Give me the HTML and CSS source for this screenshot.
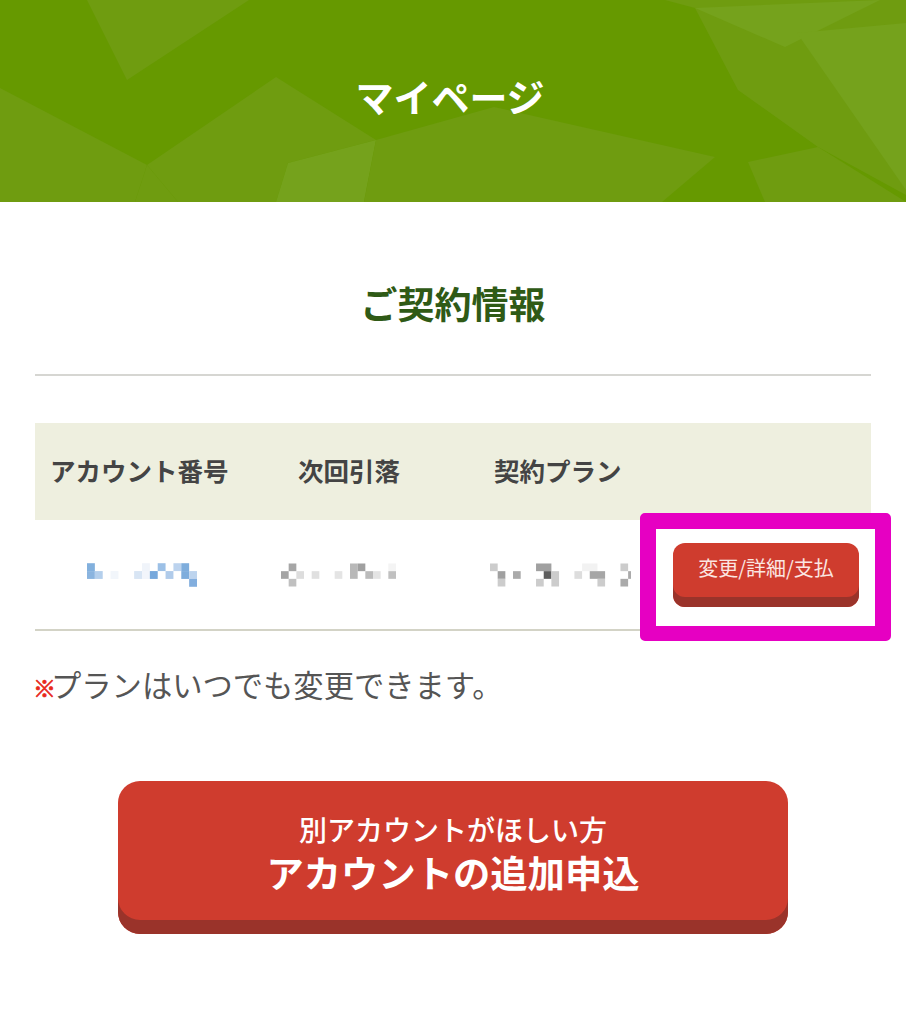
FILE: index.html
```html
<!DOCTYPE html>
<html lang="ja">
<head>
<meta charset="utf-8">
<title>マイページ</title>
<link rel="stylesheet" href="styles.css">
</head>
<body>
<header class="hero">
  <svg class="hero-bg" viewBox="0 0 906 202" preserveAspectRatio="none" aria-hidden="true">
    <polygon class="f1" points="87,0 249,0 127,80"/>
    <polygon class="f1" points="0,88 147,165 135,202 0,202"/>
    <polygon class="f1" points="147,165 276,77 376,140 288,163 276,202 178,202"/>
    <polygon class="f1" points="147,165 178,202 135,202"/>
    <polygon class="f2" points="376,140 288,163 276,202 364,202"/>
    <polygon class="f1" points="376,140 494,107 715,157 662,202 364,202"/>
    <polygon class="f1" points="665,0 906,0 906,195 818,147 738,90 695,8"/>
    <polygon class="f2" points="695,8 880,0 785,47"/>
    <polygon class="f2" points="797,33 906,23 906,190"/>
    <polygon class="f1" points="748,162 818,147 906,202 765,202"/>
  </svg>
  <h1 class="hero-title">マイページ</h1>
</header>
<main class="content">
  <h2 class="section-title">ご契約情報</h2>
  <table class="plan-table">
    <thead>
      <tr><th>アカウント番号</th><th>次回引落</th><th>契約プラン</th><th></th></tr>
    </thead>
    <tbody>
      <tr>
        <td><svg class="mosaic m1" viewBox="0 0 112 24" aria-label="モザイク"><rect x="0" y="0" width="8" height="8" fill="#82b0dd"/><rect x="56" y="0" width="8" height="8" fill="#f0f4fa"/><rect x="72" y="0" width="8" height="8" fill="#9cc0e6"/><rect x="88" y="0" width="8" height="8" fill="#bcd3ee"/><rect x="96" y="0" width="8" height="8" fill="#7eaddc"/><rect x="0" y="8" width="8" height="8" fill="#8ab4df"/><rect x="8" y="8" width="8" height="8" fill="#b4cfec"/><rect x="24" y="8" width="8" height="8" fill="#f2f6fb"/><rect x="48" y="8" width="8" height="8" fill="#d8e5f4"/><rect x="56" y="8" width="8" height="8" fill="#f2f5fb"/><rect x="64" y="8" width="8" height="8" fill="#76a8dc"/><rect x="80" y="8" width="8" height="8" fill="#b0cbea"/><rect x="96" y="8" width="8" height="8" fill="#7eaddc"/><rect x="104" y="8" width="8" height="8" fill="#bdd4ee"/><rect x="104" y="16" width="8" height="8" fill="#82aede"/></svg></td>
        <td><svg class="mosaic m2" viewBox="0 0 120 24" aria-label="モザイク"><rect x="8" y="0" width="8" height="8" fill="#a6a6a6"/><rect x="0" y="8" width="8" height="8" fill="#a4a4a4"/><rect x="16" y="8" width="8" height="8" fill="#ddd"/><rect x="8" y="16" width="8" height="8" fill="#c0c0c0"/><rect x="32" y="8" width="8" height="8" fill="#e0e0e0"/><rect x="56" y="8" width="8" height="8" fill="#e4e4e4"/><rect x="72" y="0" width="8" height="16" fill="#b8b8b8"/><rect x="80" y="0" width="8" height="8" fill="#a0a0a0"/><rect x="88" y="8" width="8" height="8" fill="#bbb"/><rect x="96" y="8" width="8" height="8" fill="#e4e4e4"/><rect x="112" y="0" width="8" height="8" fill="#f4f4f4"/><rect x="112" y="8" width="8" height="8" fill="#c0c0c0"/></svg></td>
        <td><svg class="mosaic m3" viewBox="0 0 147 24" aria-label="モザイク"><rect x="0" y="0" width="8" height="8" fill="#ccc"/><rect x="8" y="8" width="8" height="8" fill="#a0a0a0"/><rect x="8" y="16" width="8" height="8" fill="#ccc"/><rect x="24" y="8" width="8" height="8" fill="#aaa"/><rect x="48" y="0" width="16" height="8" fill="#a0a0a0"/><rect x="56" y="8" width="8" height="8" fill="#5e5e5e"/><rect x="64" y="8" width="8" height="16" fill="#ccc"/><rect x="48" y="16" width="8" height="8" fill="#ccc"/><rect x="88" y="8" width="8" height="8" fill="#ddd"/><rect x="96" y="0" width="16" height="8" fill="#f2f2f2"/><rect x="104" y="8" width="16" height="8" fill="#a6a6a6"/><rect x="112" y="16" width="8" height="8" fill="#ccc"/><rect x="136" y="0" width="8" height="8" fill="#ccc"/><rect x="136" y="16" width="8" height="8" fill="#aaa"/><rect x="144" y="8" width="3" height="8" fill="#aaa"/></svg></td>
        <td class="action-cell"><a class="btn-small" href="#">変更/詳細/支払</a></td>
      </tr>
    </tbody>
  </table>
  <p class="note"><span class="note-mark">※</span>プランはいつでも変更できます。</p>
  <a class="btn-large" href="#">
    <span class="btn-sub">別アカウントがほしい方</span>
    <span class="btn-main">アカウントの追加申込</span>
  </a>
</main>
</body>
</html>
```
FILE: styles.css
```css
*, *::before, *::after { box-sizing: border-box; }
html, body { margin: 0; padding: 0; background: #fff; }
body {
  font-family: "Noto Sans CJK JP", "Noto Sans", sans-serif;
  color: #444;
  height: 1024px;
  overflow: hidden;
}
.hero {
  position: relative;
  height: 202px;
  padding: 0 6px 10px 0;
  background: #669900;
  display: flex;
  align-items: center;
  justify-content: center;
}
.hero-bg { position: absolute; inset: 0; width: 100%; height: 100%; }
.f1 { fill: #6f9c10; }
.f2 { fill: #75a21c; }
.hero-title {
  position: relative;
  margin: 0;
  color: #fff;
  font-size: 38px;
  font-weight: 700;
  line-height: 1;
}
.content { padding: 0 35px; }
.section-title {
  margin: 0;
  height: 174px;
  padding-top: 77px;
  border-bottom: 2px solid #d6d6d2;
  text-align: center;
  font-size: 37px;
  line-height: 48px;
  font-weight: 700;
  color: #2f5a16;
}
.plan-table {
  width: 836px;
  margin-top: 47px;
  border-collapse: collapse;
  table-layout: fixed;
  border-bottom: 2px solid #d3d3c6;
}
.plan-table th {
  height: 97px;
  background: #eeefdf;
  font-size: 25.5px;
  font-weight: 700;
  color: #444;
  text-align: left;
  padding: 0 0 4px 15px;
}
.plan-table th:nth-child(1) { width: 222px; }
.plan-table th:nth-child(2) { width: 197px; padding-left: 41px; }
.plan-table th:nth-child(3) { width: 180px; padding-left: 40px; }
.plan-table td { height: 110px; padding: 0; text-align: center; }
.mosaic { display: block; height: 24px; }
.m1 { width: 110px; margin-left: 52px; }
.m2 { width: 115px; margin-left: 24px; }
.m3 { width: 141px; margin-left: 36px; }
.action-cell { position: relative; }
.btn-small {
  display: block;
  width: 186px;
  height: 64px;
  margin: 0 0 0 39px;
  padding-top: 9px;
  background: #cf3c2e;
  border-radius: 12px;
  box-shadow: inset 0 -10px 0 #9a332a;
  color: #fbe6e2;
  font-size: 20px;
  line-height: 32px;
  text-align: center;
  text-decoration: none;
}
.action-cell::after {
  content: "";
  position: absolute;
  left: 6px;
  top: -7px;
  width: 251px;
  height: 128px;
  border: 16px solid #e600c2;
  border-bottom-width: 15px;
  border-radius: 5px;
}
.note {
  margin: 32px 0 0;
  font-size: 30.3px;
  line-height: 42px;
  color: #555;
}
.note-mark {
  margin-left: -2px;
  color: #e8281a;
  font-size: 23px;
  font-weight: 700;
  letter-spacing: -5px;
  -webkit-text-stroke: 0.7px #e8281a;
}
.btn-large {
  display: flex;
  flex-direction: column;
  align-items: center;
  width: 670px;
  height: 153px;
  margin: 73px 0 0 83px;
  padding-top: 29px;
  background: #cf3c2e;
  border-radius: 22px;
  box-shadow: inset 0 -14px 0 #9a332a;
  color: #fff;
  text-decoration: none;
  font-weight: 700;
}
.btn-sub { font-size: 28px; line-height: 38px; font-weight: 500; }
.btn-main { font-size: 37.3px; line-height: 49px; }
```
